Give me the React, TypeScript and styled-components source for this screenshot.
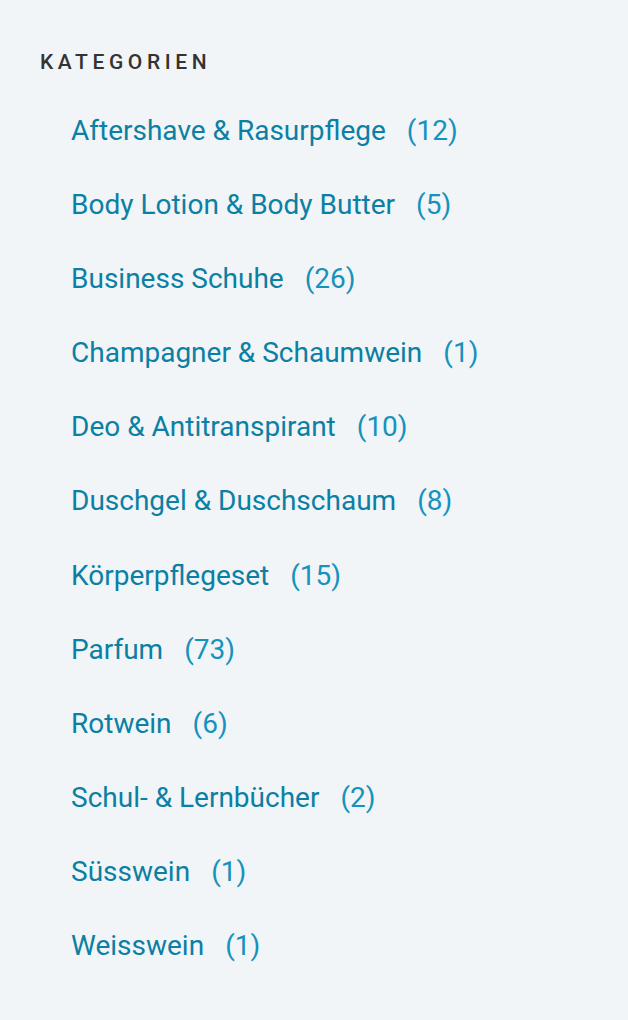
import { createGlobalStyle } from "styled-components";
import styled from "styled-components";

interface ICategory {
    name: string;
    count: number;
}

const categories: ICategory[] = [
    { name: "Aftershave & Rasurpflege", count: 12 },
    { name: "Body Lotion & Body Butter", count: 5 },
    { name: "Business Schuhe", count: 26 },
    { name: "Champagner & Schaumwein", count: 1 },
    { name: "Deo & Antitranspirant", count: 10 },
    { name: "Duschgel & Duschschaum", count: 8 },
    { name: "Körperpflegeset", count: 15 },
    { name: "Parfum", count: 73 },
    { name: "Rotwein", count: 6 },
    { name: "Schul- & Lernbücher", count: 2 },
    { name: "Süsswein", count: 1 },
    { name: "Weisswein", count: 1 },
];

const GlobalStyle = createGlobalStyle`
    html, body {
        margin: 0;
        padding: 0;
        background: #f1f5f8;
        font-family: Roboto, "Liberation Sans", sans-serif;
    }
`

const Sidebar = styled.aside`
    min-height: 1020px;
    padding: 48px 40px 0 40px;
    box-sizing: border-box;
`

const Heading = styled.h3`
    margin: 0;
    font-size: 21px;
    font-weight: 500;
    letter-spacing: 4.6px;
    line-height: 28px;
    color: #333333;
    text-transform: uppercase;
`

const List = styled.ul`
    list-style: none;
    margin: 40px 0 0 0;
    padding: 0 0 0 31px;
    display: flex;
    flex-direction: column;
    gap: 44.1px;
`

const Item = styled.li`
    display: flex;
    align-items: baseline;
    font-size: 28px;
    line-height: 30px;
`

const Name = styled.a`
    color: #0b7fa4;
    text-decoration: none;
`

const Count = styled.span`
    margin-left: 21px;
    color: #1592bd;
`

export default function App() {
    return (
        <>
            <GlobalStyle />
            <Sidebar>
                <Heading>Kategorien</Heading>
                <List>
                    {categories.map((cat) => (
                        <Item key={cat.name}>
                            <Name href="#">{cat.name}</Name>
                            <Count>({cat.count})</Count>
                        </Item>
                    ))}
                </List>
            </Sidebar>
        </>
    );
}
